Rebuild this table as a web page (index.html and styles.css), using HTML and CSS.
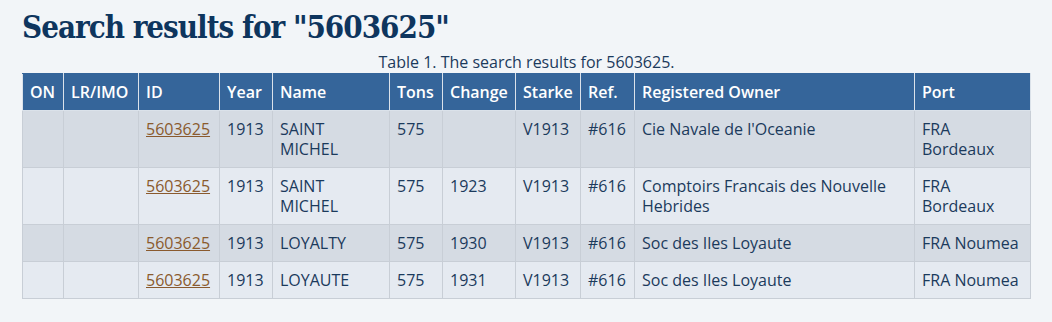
FILE: index.html
```html
<!DOCTYPE html>
<html>
<head>
<meta charset="utf-8">
<link rel="stylesheet" href="styles.css">
</head>
<body>
<div class="page">
  <h1 class="title">Search results for "5603625"</h1>
  <table class="results">
    <caption>Table 1. The search results for 5603625.</caption>
    <colgroup>
      <col class="c-on"><col class="c-lr"><col class="c-id"><col class="c-year"><col class="c-name"><col class="c-tons"><col class="c-change"><col class="c-starke"><col class="c-ref"><col class="c-owner"><col class="c-port">
    </colgroup>
    <thead>
      <tr><th>ON</th><th>LR/IMO</th><th>ID</th><th>Year</th><th>Name</th><th>Tons</th><th>Change</th><th>Starke</th><th>Ref.</th><th>Registered Owner</th><th>Port</th></tr>
    </thead>
    <tbody>
      <tr><td></td><td></td><td><a href="#">5603625</a></td><td>1913</td><td>SAINT MICHEL</td><td>575</td><td></td><td>V1913</td><td>#616</td><td>Cie Navale de l'Oceanie</td><td>FRA Bordeaux</td></tr>
      <tr><td></td><td></td><td><a href="#">5603625</a></td><td>1913</td><td>SAINT MICHEL</td><td>575</td><td>1923</td><td>V1913</td><td>#616</td><td>Comptoirs Francais des Nouvelle Hebrides</td><td>FRA Bordeaux</td></tr>
      <tr><td></td><td></td><td><a href="#">5603625</a></td><td>1913</td><td>LOYALTY</td><td>575</td><td>1930</td><td>V1913</td><td>#616</td><td>Soc des Iles Loyaute</td><td>FRA Noumea</td></tr>
      <tr><td></td><td></td><td><a href="#">5603625</a></td><td>1913</td><td>LOYAUTE</td><td>575</td><td>1931</td><td>V1913</td><td>#616</td><td>Soc des Iles Loyaute</td><td>FRA Noumea</td></tr>
    </tbody>
  </table>
</div>
</body>
</html>
```
FILE: styles.css
```css
html, body {
  margin: 0;
  padding: 0;
  background: #f2f5f8;
}
body {
  font-family: "Open Sans", "Noto Sans", sans-serif;
  font-size: 16px;
  color: #1b3a5c;
}
.page {
  padding: 6px 22px 0 22px;
}
.title {
  margin: 0;
  font-family: "DejaVu Serif Condensed", "DejaVu Serif", serif;
  font-stretch: condensed;
  font-weight: bold;
  font-size: 31px;
  line-height: 42px;
  letter-spacing: -1px;
  color: #0e355e;
}
.results {
  width: 100%;
  border-collapse: collapse;
  table-layout: fixed;
}
.results caption {
  line-height: 20px;
  padding: 4px 0 1px 0;
  color: #1b3a5c;
}
.c-on { width: 41px; }
.c-lr { width: 75px; }
.c-id { width: 81px; }
.c-year { width: 53px; }
.c-name { width: 117px; }
.c-tons { width: 53px; }
.c-change { width: 73px; }
.c-starke { width: 65px; }
.c-ref { width: 54px; }
.c-owner { width: 280px; }
.c-port { width: 116px; }
.results th {
  background: #35659a;
  color: #ffffff;
  font-weight: 600;
  text-align: left;
  padding: 8px 7px;
  line-height: 20px;
  border: 1px solid #dbe2ea;
  border-top-color: #35659a;
  white-space: nowrap;
}
.results td {
  padding: 8px 7px;
  line-height: 20px;
  vertical-align: top;
  border: 1px solid #c8ced6;
}
.results tbody tr:nth-child(odd) td { background: #d5dbe3; }
.results tbody tr:nth-child(even) td { background: #e5eaf1; }
.results a {
  color: #8a5a2e;
  text-decoration: underline;
}
```
